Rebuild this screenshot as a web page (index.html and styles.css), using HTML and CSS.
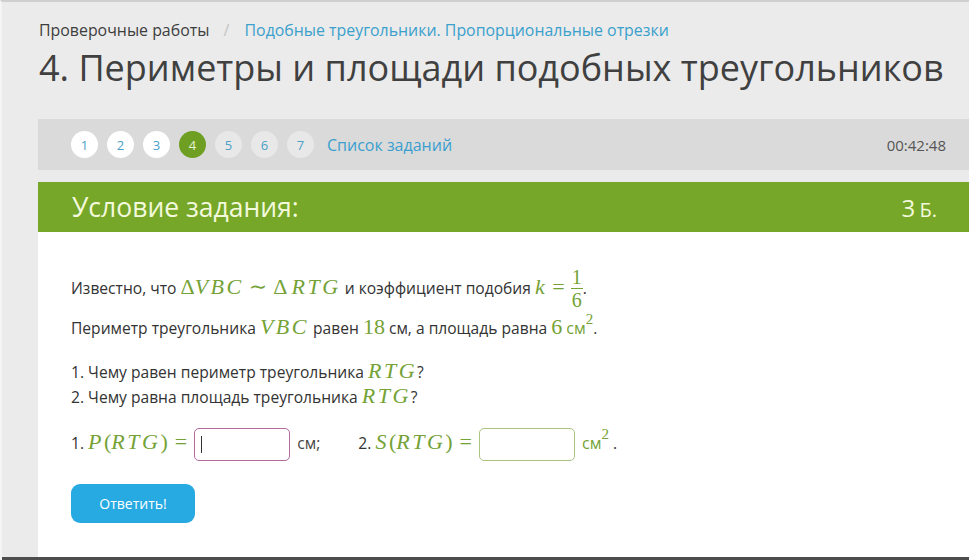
FILE: index.html
```html
<!DOCTYPE html>
<html>

<head>
    <meta charset="UTF-8">
    <title>Проверочные работы</title>
    <link rel="stylesheet" href="styles.css">
</head>

<body>
    <div class="page">
        <div class="crumbs">
            <span class="crumb">Проверочные работы</span>
            <span class="sep">/</span>
            <a class="crumb-link">Подобные треугольники. Пропорциональные отрезки</a>
        </div>
        <h1 class="title">4. Периметры и площади подобных треугольников</h1>

        <div class="tasks">
            <div class="nums">
                <span class="num done">1</span>
                <span class="num done">2</span>
                <span class="num done">3</span>
                <span class="num current">4</span>
                <span class="num">5</span>
                <span class="num">6</span>
                <span class="num">7</span>
                <a class="list-link">Список заданий</a>
            </div>
            <div class="timer">00:42:48</div>
        </div>

        <div class="task-head">
            <span>Условие задания:</span>
            <span class="points">3 <small>Б.</small></span>
        </div>

        <div class="task-body">
            <p class="line first">Известно, что <span class="m"><span class="up">Δ</span><i>VBC</i><span class="rel">∼</span><span class="up">Δ</span> <i>RTG</i></span> и коэффициент подобия <span class="m"><i>k</i><span class="rel">=</span><span class="frac"><span class="top">1</span><span class="bot">6</span></span></span>.</p>
            <p class="line">Периметр треугольника <span class="m"><i>VBC</i></span> равен <span class="m up">18</span> см, а площадь равна <span class="m up">6</span> <span class="unit">см</span><sup class="m up">2</sup>.</p>

            <div class="questions">
                <p>1. Чему равен периметр треугольника <span class="m"><i>RTG</i></span>?</p>
                <p>2. Чему равна площадь треугольника <span class="m"><i>RTG</i></span>?</p>
            </div>

            <div class="answers">
                1. <span class="m"><i>P</i><span class="up">(</span><i>RTG</i><span class="up">)</span><span class="rel">=</span></span><span class="field-wrap"><input type="text" class="field focus" value=""><span class="caret"></span></span>
                <span class="unit-text">см;</span>
                <span class="second">2. <span class="m"><i>S</i><span class="up">(</span><i>RTG</i><span class="up">)</span><span class="rel">=</span></span></span><span class="field-wrap"><input type="text" class="field" value=""></span>
                <span class="unit">см</span><sup class="m up">2</sup><span class="dot">.</span>
            </div>

            <button class="send">Ответить!</button>
        </div>
    </div>
    <div class="bottom"></div>
</body>

</html>
```

FILE: styles.css
```css
html,
body {
    margin: 0;
    padding: 0;
    height: 560px;
    overflow: hidden;
}

body {
    background-color: #ebebeb;
    border-top: 2px solid #cfcfcf;
    border-left: 2px solid #f4f4f4;
    box-sizing: border-box;
    font-family: "Open Sans", "Liberation Sans", sans-serif;
    color: #333;
    display: flex;
    flex-direction: column;
}

.page {
    flex: 1;
    padding-left: 36px;
    display: flex;
    flex-direction: column;
}

.crumbs {
    margin-top: 18px;
    font-size: 15.9px;
    line-height: 20px;
    padding-left: 1px;
}

.crumb {
    color: #3d3d3d;
}

.sep {
    color: #c4c4c4;
    margin: 0 11px 0 10px;
}

.crumb-link {
    color: #3aa0cc;
}

.title {
    margin: 6px 0 0 0;
    padding-left: 1px;
    font-size: 36px;
    font-weight: normal;
    line-height: 44px;
    color: #404040;
}

.tasks {
    margin-top: 29px;
    height: 51px;
    background-color: #dadada;
    display: flex;
    align-items: center;
    justify-content: space-between;
    padding: 0 23px 0 33px;
}

.nums {
    display: flex;
    align-items: center;
    gap: 9px;
}

.num {
    width: 27px;
    height: 27px;
    border-radius: 50%;
    background-color: #e8e8e8;
    color: #4a9fc7;
    font-size: 13px;
    display: flex;
    align-items: center;
    justify-content: center;
}

.num.done {
    background-color: #fff;
}

.num.current {
    background-color: #6e9f22;
    color: #e8f3d3;
}

.list-link {
    color: #3a9fcf;
    font-size: 16px;
    margin-left: 4px;
}

.timer {
    color: #555;
    font-size: 15px;
}

.task-head {
    margin-top: 12px;
    height: 50px;
    background-color: #76a728;
    color: #f3f9dc;
    font-size: 26.5px;
    display: flex;
    align-items: center;
    justify-content: space-between;
    padding: 0 32px 0 34px;
}

.points {
    font-size: 24px;
    word-spacing: -2px;
}

.points small {
    font-size: 20px;
}

.task-body {
    flex: 1;
    background-color: #fff;
    padding: 32px 33px 0 33px;
    font-size: 15.6px;
    color: #333;
}

.task-body p {
    margin: 0;
}

.line {
    line-height: 22px;
}

.line.first {
    height: 46px;
    line-height: 46px;
}

.m {
    font-family: "Liberation Serif", "DejaVu Serif", serif;
    color: #74a236;
    font-size: 22px;
}

.m i {
    letter-spacing: 2.5px;
}

.up {
    font-style: normal;
}

.rel {
    font-style: normal;
    margin: 0 6px 0 5px;
}

.frac {
    display: inline-flex;
    flex-direction: column;
    align-items: center;
    vertical-align: middle;
    line-height: 22px;
    font-size: 20px;
}

.frac .top {
    border-bottom: 1px solid #74a236;
    padding: 0 1px;
}

.line sup,
.answers sup {
    font-size: 15px;
    line-height: 0;
    vertical-align: 10px;
}

.unit {
    color: #74a236;
    font-size: 16px;
}

.line + .line {
    margin-top: 6px;
}

.questions {
    margin-top: 20px;
    line-height: 23px;
}

.answers {
    margin-top: 16px;
    line-height: 33px;
    height: 33px;
    white-space: nowrap;
}

.answers .rel {
    margin: 0 7px 0 7px;
}

.field-wrap {
    display: inline-block;
    position: relative;
    vertical-align: middle;
    margin: 0 3px 0 0;
}

.field {
    display: block;
    width: 96px;
    height: 33px;
    box-sizing: border-box;
    border: 1px solid #a9c47f;
    border-radius: 5px;
    outline: none;
    margin: 0;
}

.field.focus {
    border-color: #b56a9e;
}

.caret {
    position: absolute;
    left: 7px;
    top: 8px;
    width: 1px;
    height: 17px;
    background-color: #333;
}

.unit-text {
    color: #444;
}

.second {
    margin-left: 34px;
}

.dot {
    margin-left: 4px;
}

.send {
    display: block;
    margin-top: 26px;
    width: 124px;
    height: 39px;
    border: none;
    border-radius: 9px;
    background-color: #27aae1;
    color: #fff;
    font-family: "Open Sans", "Liberation Sans", sans-serif;
    font-size: 14px;
    cursor: pointer;
}

.bottom {
    height: 3px;
    background-color: #4d4d4d;
}
```
